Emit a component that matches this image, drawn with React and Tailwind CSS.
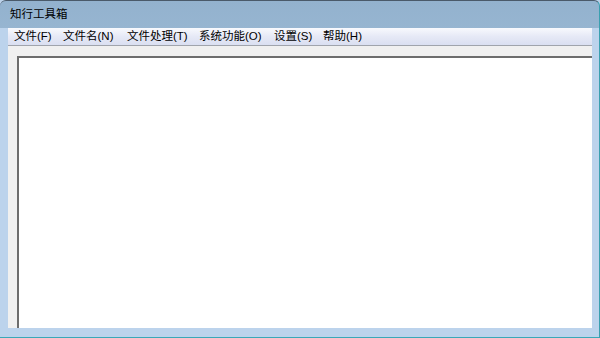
import React from 'react';

const menus = [
  { label: '文件(F)', w: 'w-[49px]' },
  { label: '文件名(N)', w: 'w-[64px]' },
  { label: '文件处理(T)', w: 'w-[72px]' },
  { label: '系统功能(O)', w: 'w-[75px]' },
  { label: '设置(S)', w: 'w-[49px]' },
  { label: '帮助(H)', w: 'w-[60px]' },
];

export default function App() {
  return (
    <div
      className="w-[600px] h-[338px] overflow-hidden bg-[#bcd2ea]"
      style={{ fontFamily: '"Liberation Sans", "Noto Sans CJK SC", sans-serif' }}
    >
      <div className="flex flex-col h-full rounded-t-[6px] border-t border-r border-[#4a5a6a] border-r-[#3aa0b0] bg-gradient-to-b from-[#93b2ce] via-[#a9c4de] to-[#bdd5ec]">
        {/* Title bar */}
        <div className="h-[27px] flex items-center pl-[10px] pt-[1px] text-[11.5px] text-black shrink-0">
          知行工具箱
        </div>

        <div className="flex-1 flex flex-col pl-[8px] pr-[7px] pb-[9px] bg-[#bcd3ec] border-b border-[#3aa8b8]">
          {/* Menu bar */}
          <div className="h-[18px] flex items-center pl-[6px] text-[11.5px] text-black bg-gradient-to-b from-[#f8f9fd] via-[#e6e9f6] to-[#dadff1] border-b border-[#a0a4ac] shrink-0">
            {menus.map((m) => (
              <span key={m.label} className={`${m.w} leading-none whitespace-nowrap`}>{m.label}</span>
            ))}
          </div>

          {/* Client area */}
          <div className="flex-1 flex flex-col bg-[#f0f0f0] pt-[10px] pl-[9px]">
            <div className="flex-1 bg-white border-t-2 border-l-2 border-t-[#6d6d6d] border-l-[#6d6d6d]" />
          </div>
        </div>
      </div>
    </div>
  );
}
